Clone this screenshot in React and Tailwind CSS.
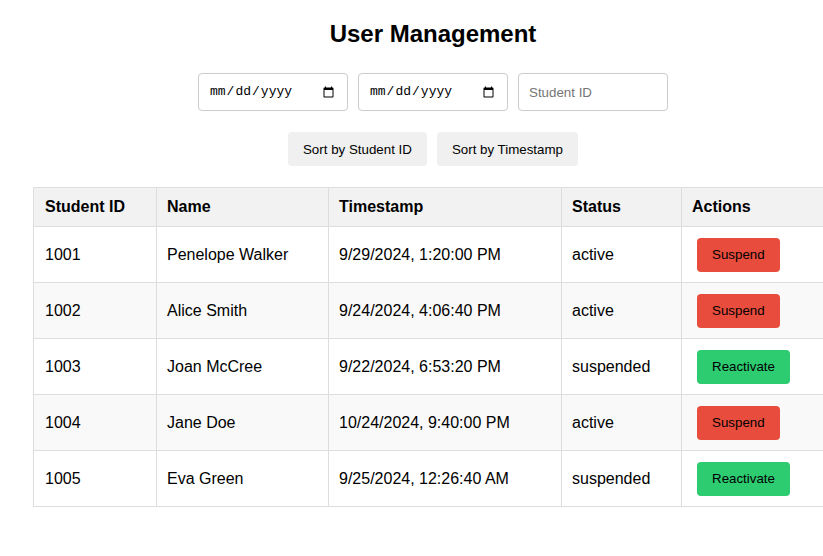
import { useState } from 'react';

const users = [
  { id: 1001, name: 'Penelope Walker', ts: '9/29/2024, 1:20:00 PM', status: 'active' },
  { id: 1002, name: 'Alice Smith', ts: '9/24/2024, 4:06:40 PM', status: 'active' },
  { id: 1003, name: 'Joan McCree', ts: '9/22/2024, 6:53:20 PM', status: 'suspended' },
  { id: 1004, name: 'Jane Doe', ts: '10/24/2024, 9:40:00 PM', status: 'active' },
  { id: 1005, name: 'Eva Green', ts: '9/25/2024, 12:26:40 AM', status: 'suspended' },
];

const cell = 'border border-[#ddd] px-[10px] text-left align-middle';

export default function App() {
  const [rows] = useState(users);

  return (
    <div className="w-full overflow-hidden bg-white font-['Liberation_Sans',Arial,sans-serif] text-black">
      <div className="w-[866px] px-[33px] pt-[19px] pb-10">
        <h2 className="text-center text-[24px] font-bold leading-[30px]">User Management</h2>

        <div className="mt-[24px] flex justify-center gap-[10px]">
          <input type="date" className="h-[38px] w-[150px] rounded-[4px] border border-[#ccc] px-[10px] text-[13px] font-['Liberation_Mono',monospace]" />
          <input type="date" className="h-[38px] w-[150px] rounded-[4px] border border-[#ccc] px-[10px] text-[13px] font-['Liberation_Mono',monospace]" />
          <input
            type="text"
            placeholder="Student ID"
            className="h-[38px] w-[150px] rounded-[4px] border border-[#ccc] px-[10px] text-[13.33px] placeholder:text-[#757575]"
          />
        </div>

        <div className="mt-[21px] flex justify-center gap-[10px]">
          <button className="h-[34px] rounded-[4px] bg-[#f0f0f0] px-[15px] pt-px text-[13.33px]">Sort by Student ID</button>
          <button className="h-[34px] rounded-[4px] bg-[#f0f0f0] px-[15px] pt-px text-[13.33px]">Sort by Timestamp</button>
        </div>

        <table className="mt-[21px] w-[800px] table-fixed border-collapse text-[16px]">
          <colgroup>
            <col className="w-[123px]" />
            <col className="w-[172px]" />
            <col className="w-[233px]" />
            <col className="w-[120px]" />
            <col className="w-[152px]" />
          </colgroup>
          <thead>
            <tr className="h-[39px] bg-[#f2f2f2]">
              <th className={`${cell} pl-[11px] font-bold`}>Student ID</th>
              <th className={`${cell} font-bold`}>Name</th>
              <th className={`${cell} font-bold`}>Timestamp</th>
              <th className={`${cell} font-bold`}>Status</th>
              <th className={`${cell} font-bold`}>Actions</th>
            </tr>
          </thead>
          <tbody>
            {rows.map((u, i) => (
              <tr key={u.id} className={`h-[56px] ${i % 2 === 1 ? 'bg-[#f9f9f9]' : 'bg-white'}`}>
                <td className={`${cell} pl-[11px]`}>{u.id}</td>
                <td className={cell}>{u.name}</td>
                <td className={cell}>{u.ts}</td>
                <td className={cell}>{u.status}</td>
                <td className={cell}>
                  {u.status === 'active' ? (
                    <button className="ml-[5px] h-[34px] rounded-[4px] bg-[#e74c3c] px-[15px] text-[13.33px] text-black">Suspend</button>
                  ) : (
                    <button className="ml-[5px] h-[34px] rounded-[4px] bg-[#2ecc71] px-[15px] text-[13.33px] text-black">Reactivate</button>
                  )}
                </td>
              </tr>
            ))}
          </tbody>
        </table>
      </div>
    </div>
  );
}
